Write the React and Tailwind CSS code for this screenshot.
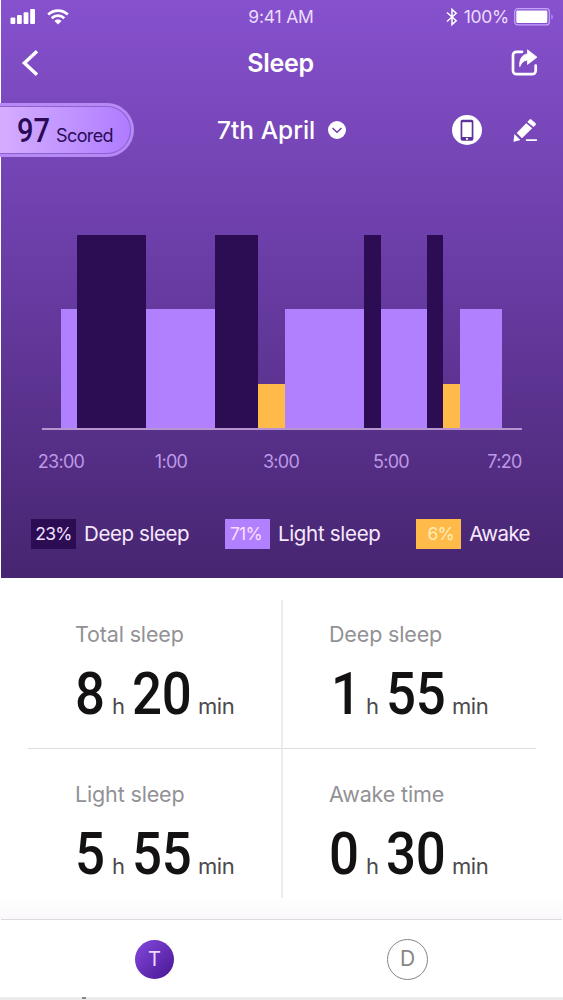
import { useState } from 'react';

const SEGMENTS = [
    { type: 'light', width: 16 },
    { type: 'deep', width: 69 },
    { type: 'light', width: 69 },
    { type: 'deep', width: 43 },
    { type: 'awake', width: 27 },
    { type: 'light', width: 79 },
    { type: 'deep', width: 17 },
    { type: 'light', width: 46 },
    { type: 'deep', width: 16 },
    { type: 'awake', width: 17 },
    { type: 'light', width: 42 },
];

const SEGMENT_STYLES = {
    deep: 'h-[193px] bg-[#2c0d54]',
    light: 'h-[119px] bg-[#b180ff]',
    awake: 'h-[44px] bg-[#ffba49]',
};

function SignalIcon() {
    return (
        <svg width="25" height="16" viewBox="0 0 25 16" fill="white">
            <rect x="0.5" y="8.5" width="4.8" height="6.5" rx="1" />
            <rect x="7" y="6" width="4.8" height="9" rx="1" />
            <rect x="13.6" y="3.2" width="4.8" height="11.8" rx="1" />
            <rect x="20.2" y="0" width="4.8" height="15" rx="1" />
        </svg>
    );
}

function WifiIcon() {
    return (
        <svg width="22" height="16" viewBox="0 0 22 16" fill="none" stroke="white" strokeWidth="2.7">
            <path d="M1.2 5.6C6.8 0.3 15.2 0.3 20.8 5.6" />
            <path d="M4.7 9.2C8.3 5.8 13.7 5.8 17.3 9.2" />
            <path d="M7.5 11.9C9.5 10 12.5 10 14.5 11.9L11 15.4Z" fill="white" stroke="none" />
        </svg>
    );
}

function BluetoothIcon() {
    return (
        <svg width="12" height="18" viewBox="0 0 12 18" fill="none" stroke="white" strokeWidth="1.5">
            <path d="M1 4.5L10.2 12.8L6 16.6V1.4L10.2 5.2L1 13.5" />
        </svg>
    );
}

function BatteryIcon() {
    return (
        <svg width="40" height="18" viewBox="0 0 40 18" fill="none">
            <rect x="0.7" y="0.7" width="34.6" height="16.2" rx="3" stroke="#c5a3ff" strokeWidth="1.2" />
            <rect x="2.3" y="2.6" width="31" height="12.4" rx="1.2" fill="white" />
            <path d="M37.2 6.2C39.6 7.4 39.6 10.4 37.2 11.6Z" fill="#ad88e8" />
        </svg>
    );
}

function ShareIcon() {
    return (
        <svg width="28" height="28" viewBox="0 0 28 28" fill="none">
            <path
                d="M11 2.8H5.5A3.5 3.5 0 0 0 2 6.3V21.7A3.5 3.5 0 0 0 5.5 25.2H21.2A3.5 3.5 0 0 0 24.7 21.7V16.5"
                stroke="white"
                strokeWidth="2.7"
                strokeLinecap="round"
            />
            <path
                d="M16.5 0.8L26 8.2L16.5 15.4V11.2C13 11.2 10.5 13.5 8.8 17.7C8 10.7 11 5.5 16.5 4.9Z"
                fill="white"
                stroke="white"
                strokeWidth="0.8"
                strokeLinejoin="round"
            />
        </svg>
    );
}

function PhoneIcon() {
    return (
        <svg width="30" height="30" viewBox="0 0 30 30">
            <circle cx="15" cy="15" r="15" fill="white" />
            <rect x="8.6" y="4.8" width="12.8" height="21" rx="1.8" fill="#5e3399" />
            <rect x="10.3" y="7.2" width="9.4" height="14.8" fill="white" />
            <circle cx="15" cy="23.9" r="1.1" fill="white" />
        </svg>
    );
}

function PencilIcon() {
    return (
        <svg width="25" height="25" viewBox="0 0 25 25" fill="white">
            <path d="M14.3 4L16.6 1.5Q17.4 0.7 18.3 1.5L22.6 5.2Q23.4 6 22.6 6.9L20.5 9.1Z" />
            <path d="M13.2 5.2L19.2 10.3L9 20.3L3.7 14.9Z" />
            <path d="M1.4 16L7.4 22L1 23.8Q0.4 23.9 0.5 23.2Z" />
            <rect x="12.7" y="21.2" width="11.5" height="1.8" rx="0.9" />
        </svg>
    );
}

function LegendItem({ percent, label, className, textClass }) {
    return (
        <div className="flex items-center gap-2">
            <span
                className={`flex h-[30px] w-[45px] items-center justify-center text-[17.5px] tracking-[-0.8px] ${className}`}
            >
                {percent}
            </span>
            <span className={`whitespace-nowrap text-[20.5px] text-[#f6e9ff] ${textClass}`}>{label}</span>
        </div>
    );
}

function Digits({ value, className }) {
    return (
        <span className={`font-[Roboto,sans-serif] text-[60px] font-medium leading-[60px] text-[#141112] ${className}`}>
            <span className="inline-block origin-left scale-x-[0.88]">{value}</span>
        </span>
    );
}

function Stat({ label, hours, minutes, className }) {
    return (
        <div className={className}>
            <p className="text-[21.5px] leading-[28px] tracking-[-0.15px] text-[#929195]">{label}</p>
            <div className="mt-[16px] flex items-baseline text-[22px] tracking-[-0.4px] text-[#4b494b]">
                <Digits value={hours} className={hours === '1' ? 'w-[37px] pl-[2px]' : 'w-[37px]'} />
                <span className="w-[20px]">h</span>
                <Digits value={minutes} className="w-[66px]" />
                <span>min</span>
            </div>
        </div>
    );
}

export default function App() {
    const [tab, setTab] = useState('T');

    return (
        <div className="flex h-[1000px] w-[563px] flex-col overflow-hidden bg-white font-[Inter,sans-serif]">
            <section className="ml-px flex h-[578px] flex-col bg-linear-to-b from-[#8751ce] via-[#673ba2] via-50% to-[#472570] text-white">
                {/* Status bar */}
                <div className="flex h-[34px] items-center justify-between pl-[9px] pr-[9px]">
                    <div className="flex w-[180px] items-center gap-[12px]">
                        <SignalIcon />
                        <WifiIcon />
                    </div>
                    <span className="-ml-[2px] mt-px text-[17.5px] tracking-[-0.2px] text-[#ecdcff]">9:41 AM</span>
                    <div className="flex w-[180px] items-center justify-end">
                        <BluetoothIcon />
                        <span className="ml-[6px] mr-[5px] mt-px text-[17.5px] tracking-[-0.3px] text-[#ecdcff]">100%</span>
                        <BatteryIcon />
                    </div>
                </div>

                {/* Title */}
                <header className="flex h-[57px] items-center justify-between pl-[20px] pr-[24px]">
                    <button type="button" aria-label="Back" className="w-[28px]">
                        <svg width="18" height="28" viewBox="0 0 18 28" fill="none" stroke="white" strokeWidth="3.4">
                            <path d="M16 2.2L3.4 14L16 25.8" />
                        </svg>
                    </button>
                    <h1 className="mt-[2px] pl-px text-[25px] font-semibold tracking-[-0.3px]">Sleep</h1>
                    <button type="button" aria-label="Share">
                        <ShareIcon />
                    </button>
                </header>

                {/* Score, date and actions */}
                <div className="mt-[12px] flex h-[54px] items-center">
                    <div className="-ml-px h-[54px] w-[134px] rounded-r-full bg-[#b58af5] py-[3px] pr-[3px]">
                        <div className="flex h-full items-baseline rounded-r-full border border-l-0 border-[#8f60d4] bg-linear-to-r from-[#d5adff] to-[#af7cff] pl-[17px] text-[#2b0b58]">
                            <span className="font-[Roboto,sans-serif] text-[33px] font-medium leading-[48px]">
                                <span className="inline-block w-[33px] origin-left scale-x-[0.88]">97</span>
                            </span>
                            <span className="ml-[6px] text-[18px] tracking-[-0.6px]">Scored</span>
                        </div>
                    </div>
                    <button type="button" className="ml-[83px] flex items-center">
                        <span className="w-[98px] whitespace-nowrap text-left text-[24.5px] font-medium">7th April</span>
                        <svg className="ml-[13px]" width="18" height="18" viewBox="0 0 18 18">
                            <circle cx="9" cy="9" r="9" fill="white" />
                            <path d="M4.5 7L9 11.3L13.5 7" fill="none" stroke="#6b3aab" strokeWidth="1.4" />
                        </svg>
                    </button>
                    <div className="ml-[106px] flex items-center gap-[31px]">
                        <PhoneIcon />
                        <PencilIcon />
                    </div>
                </div>

                {/* Chart */}
                <div className="mx-[41px] mt-[78px] flex h-[195px] items-end border-b-2 border-[#b795cf] pl-[19px]">
                    {SEGMENTS.map((segment, i) => (
                        <div
                            key={i}
                            className={`shrink-0 ${SEGMENT_STYLES[segment.type]}`}
                            style={{ width: segment.width }}
                        />
                    ))}
                </div>
                <div className="mt-[20px] flex pl-[5px] text-center text-[18px] leading-[24px] tracking-[-0.7px] text-[#bd98e6]">
                    <span className="w-[110px]">23:00</span>
                    <span className="w-[110px]">1:00</span>
                    <span className="w-[110px]">3:00</span>
                    <span className="w-[110px]">5:00</span>
                    <span className="w-[117px]">7:20</span>
                </div>

                {/* Legend */}
                <div className="mt-[45px] flex items-center justify-between pl-[30px] pr-[33px]">
                    <LegendItem percent="23%" label="Deep sleep" className="bg-[#2c0d54] text-[#f0dfff]" textClass="tracking-[-0.4px]" />
                    <LegendItem percent="71%" label="Light sleep" className="bg-[#b180ff] pr-[3px] text-[#f9dfff]" textClass="tracking-[-0.3px]" />
                    <LegendItem percent="6%" label="Awake" className="bg-[#ffba49] pl-[4px] text-[#ffedb8]" textClass="tracking-[-0.6px]" />
                </div>
            </section>

            {/* Totals */}
            <section className="mx-[28px] mt-[22px] grid h-[298px] w-[508px] grid-cols-[255px_253px] grid-rows-[149px_149px]">
                <Stat label="Total sleep" hours="8" minutes="20" className="border-b border-r-2 border-b-[#dedede] border-r-[#ececee] pl-[47px] pt-[20px]" />
                <Stat label="Deep sleep" hours="1" minutes="55" className="border-b border-b-[#dedede] pl-[46px] pt-[20px]" />
                <Stat label="Light sleep" hours="5" minutes="55" className="border-r-2 border-r-[#ececee] pl-[47px] pt-[31px]" />
                <Stat label="Awake time" hours="0" minutes="30" className="pl-[46px] pt-[31px]" />
            </section>

            {/* Bottom tabs */}
            <div className="h-[21px] bg-linear-to-b from-white to-[#faf8fb]" />
            <nav className="mx-px flex h-[78px] items-center border-t border-[#ded8df] pl-[134px] pt-px">
                <button
                    type="button"
                    onClick={() => setTab('T')}
                    className={`flex size-[39px] items-center justify-center rounded-full text-[20px] ${tab === 'T'
                            ? 'bg-linear-to-br from-[#8748de] to-[#481594] text-[#efd9ff]'
                            : 'border border-[#858585] text-[#858585]'
                        }`}
                >
                    T
                </button>
                <button
                    type="button"
                    onClick={() => setTab('D')}
                    className={`ml-[213px] flex size-[41px] items-center justify-center rounded-full text-[21px] ${tab === 'D'
                            ? 'bg-linear-to-br from-[#8748de] to-[#481594] text-[#efd9ff]'
                            : 'border-[1.5px] border-[#858585] text-[#858585]'
                        }`}
                >
                    D
                </button>
            </nav>
            <div className="h-[3px] bg-[#eceaed] pl-[82px]">
                <div className="h-[2px] w-[4px] bg-[#8a888c]" />
            </div>
        </div>
    );
}
